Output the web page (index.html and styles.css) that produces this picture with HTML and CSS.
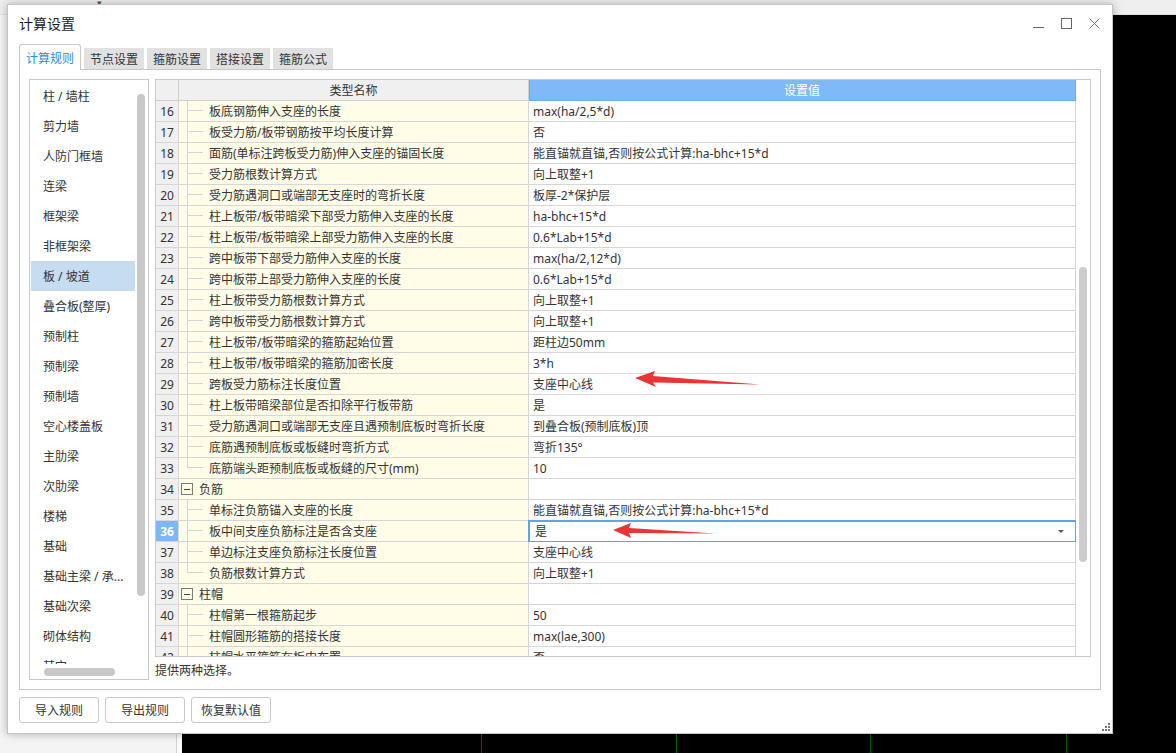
FILE: index.html
```html
<!DOCTYPE html>
<html lang="zh">
<head>
<meta charset="utf-8">
<title>计算设置</title>
<link rel="stylesheet" href="styles.css">
</head>
<body>
<div class="desktop">
  <div class="app-left"></div>
  <div class="app-top"><span class="caret">▾</span></div>
  <div class="bottom-strip">
    <i class="gl"></i><i class="gl"></i><i class="gl"></i><i class="gl"></i>
  </div>

  <div class="dialog">
    <div class="titlebar">
      <div class="title">计算设置</div>
      <div class="controls">
        <svg width="11" height="11" viewBox="0 0 11 11"><path d="M0 9.5H11" stroke="#666" stroke-width="1"/></svg>
        <svg width="11" height="11" viewBox="0 0 11 11"><rect x="0.5" y="0.5" width="10" height="10" fill="none" stroke="#666" stroke-width="1"/></svg>
        <svg width="11" height="11" viewBox="0 0 11 11"><path d="M0.5 0.5L10.5 10.5M10.5 0.5L0.5 10.5" stroke="#777" stroke-width="1"/></svg>
      </div>
    </div>

    <div class="tabs">
      <div class="tab active">计算规则</div>
      <div class="tab">节点设置</div>
      <div class="tab">箍筋设置</div>
      <div class="tab">搭接设置</div>
      <div class="tab">箍筋公式</div>
    </div>

    <div class="panel">
      <div class="list">
        <div class="items">
          <div class="item">柱 / 墙柱</div>
          <div class="item">剪力墙</div>
          <div class="item">人防门框墙</div>
          <div class="item">连梁</div>
          <div class="item">框架梁</div>
          <div class="item">非框架梁</div>
          <div class="item sel">板 / 坡道</div>
          <div class="item">叠合板(整厚)</div>
          <div class="item">预制柱</div>
          <div class="item">预制梁</div>
          <div class="item">预制墙</div>
          <div class="item">空心楼盖板</div>
          <div class="item">主肋梁</div>
          <div class="item">次肋梁</div>
          <div class="item">楼梯</div>
          <div class="item">基础</div>
          <div class="item">基础主梁 / 承...</div>
          <div class="item">基础次梁</div>
          <div class="item">砌体结构</div>
          <div class="item">其它</div>
        </div>
        <div class="lvs"><div class="thumb-v"></div></div>
        <div class="lhs"><div class="thumb-h"></div></div>
        <div class="corner"></div>
      </div>

      <div class="rightcol">
        <div class="grid">
          <div class="table">
            <div class="row head">
              <div class="c-num"></div>
              <div class="c-name">类型名称</div>
              <div class="c-val">设置值</div>
            </div>
            <div class="body">
              <div class="row"><div class="c-num">16</div><div class="c-name"><span class="br"><i></i><i></i></span>板底钢筋伸入支座的长度</div><div class="c-val">max(ha/2,5*d)</div></div>
              <div class="row"><div class="c-num">17</div><div class="c-name"><span class="br"><i></i><i></i></span>板受力筋/板带钢筋按平均长度计算</div><div class="c-val">否</div></div>
              <div class="row"><div class="c-num">18</div><div class="c-name"><span class="br"><i></i><i></i></span>面筋(单标注跨板受力筋)伸入支座的锚固长度</div><div class="c-val">能直锚就直锚,否则按公式计算:ha-bhc+15*d</div></div>
              <div class="row"><div class="c-num">19</div><div class="c-name"><span class="br"><i></i><i></i></span>受力筋根数计算方式</div><div class="c-val">向上取整+1</div></div>
              <div class="row"><div class="c-num">20</div><div class="c-name"><span class="br"><i></i><i></i></span>受力筋遇洞口或端部无支座时的弯折长度</div><div class="c-val">板厚-2*保护层</div></div>
              <div class="row"><div class="c-num">21</div><div class="c-name"><span class="br"><i></i><i></i></span>柱上板带/板带暗梁下部受力筋伸入支座的长度</div><div class="c-val">ha-bhc+15*d</div></div>
              <div class="row"><div class="c-num">22</div><div class="c-name"><span class="br"><i></i><i></i></span>柱上板带/板带暗梁上部受力筋伸入支座的长度</div><div class="c-val">0.6*Lab+15*d</div></div>
              <div class="row"><div class="c-num">23</div><div class="c-name"><span class="br"><i></i><i></i></span>跨中板带下部受力筋伸入支座的长度</div><div class="c-val">max(ha/2,12*d)</div></div>
              <div class="row"><div class="c-num">24</div><div class="c-name"><span class="br"><i></i><i></i></span>跨中板带上部受力筋伸入支座的长度</div><div class="c-val">0.6*Lab+15*d</div></div>
              <div class="row"><div class="c-num">25</div><div class="c-name"><span class="br"><i></i><i></i></span>柱上板带受力筋根数计算方式</div><div class="c-val">向上取整+1</div></div>
              <div class="row"><div class="c-num">26</div><div class="c-name"><span class="br"><i></i><i></i></span>跨中板带受力筋根数计算方式</div><div class="c-val">向上取整+1</div></div>
              <div class="row"><div class="c-num">27</div><div class="c-name"><span class="br"><i></i><i></i></span>柱上板带/板带暗梁的箍筋起始位置</div><div class="c-val">距柱边50mm</div></div>
              <div class="row"><div class="c-num">28</div><div class="c-name"><span class="br"><i></i><i></i></span>柱上板带/板带暗梁的箍筋加密长度</div><div class="c-val">3*h</div></div>
              <div class="row"><div class="c-num">29</div><div class="c-name"><span class="br"><i></i><i></i></span>跨板受力筋标注长度位置</div><div class="c-val">支座中心线</div></div>
              <div class="row"><div class="c-num">30</div><div class="c-name"><span class="br"><i></i><i></i></span>柱上板带暗梁部位是否扣除平行板带筋</div><div class="c-val">是</div></div>
              <div class="row"><div class="c-num">31</div><div class="c-name"><span class="br"><i></i><i></i></span>受力筋遇洞口或端部无支座且遇预制底板时弯折长度</div><div class="c-val">到叠合板(预制底板)顶</div></div>
              <div class="row"><div class="c-num">32</div><div class="c-name"><span class="br"><i></i><i></i></span>底筋遇预制底板或板缝时弯折方式</div><div class="c-val">弯折135°</div></div>
              <div class="row"><div class="c-num">33</div><div class="c-name"><span class="br last"><i></i><i></i></span>底筋端头距预制底板或板缝的尺寸(mm)</div><div class="c-val">10</div></div>
              <div class="row"><div class="c-num">34</div><div class="c-name"><span class="box"></span>负筋</div><div class="c-val"></div></div>
              <div class="row"><div class="c-num">35</div><div class="c-name"><span class="br"><i></i><i></i></span>单标注负筋锚入支座的长度</div><div class="c-val">能直锚就直锚,否则按公式计算:ha-bhc+15*d</div></div>
              <div class="row"><div class="c-num cur">36</div><div class="c-name"><span class="br"><i></i><i></i></span>板中间支座负筋标注是否含支座</div><div class="c-val editing"><span>是</span><span class="dd"></span></div></div>
              <div class="row"><div class="c-num">37</div><div class="c-name"><span class="br"><i></i><i></i></span>单边标注支座负筋标注长度位置</div><div class="c-val">支座中心线</div></div>
              <div class="row"><div class="c-num">38</div><div class="c-name"><span class="br last"><i></i><i></i></span>负筋根数计算方式</div><div class="c-val">向上取整+1</div></div>
              <div class="row"><div class="c-num">39</div><div class="c-name"><span class="box"></span>柱帽</div><div class="c-val"></div></div>
              <div class="row"><div class="c-num">40</div><div class="c-name"><span class="br"><i></i><i></i></span>柱帽第一根箍筋起步</div><div class="c-val">50</div></div>
              <div class="row"><div class="c-num">41</div><div class="c-name"><span class="br"><i></i><i></i></span>柱帽圆形箍筋的搭接长度</div><div class="c-val">max(lae,300)</div></div>
              <div class="row"><div class="c-num">42</div><div class="c-name"><span class="br"><i></i><i></i></span>柱帽水平箍筋在板中布置</div><div class="c-val">否</div></div>
            </div>
          </div>
          <div class="vs"><div class="thumb-g"></div></div>
        </div>
        <div class="note">提供两种选择。</div>
      </div>
    </div>

    <div class="buttons">
      <div class="btn">导入规则</div>
      <div class="btn">导出规则</div>
      <div class="btn">恢复默认值</div>
    </div>

    <svg class="grip" width="8" height="8" viewBox="0 0 8 8">
      <rect x="6" y="0" width="2" height="2" fill="#777"/>
      <rect x="3" y="3" width="2" height="2" fill="#777"/>
      <rect x="6" y="3" width="2" height="2" fill="#777"/>
      <rect x="0" y="6" width="2" height="2" fill="#777"/>
      <rect x="3" y="6" width="2" height="2" fill="#777"/>
      <rect x="6" y="6" width="2" height="2" fill="#777"/>
    </svg>
  </div>

  <svg class="arrows" width="1176" height="753" viewBox="0 0 1176 753">
    <polygon points="635,378 655,371 653,376 760,384.5 653,382.5 656,387" fill="#e83535"/>
    <polygon points="613,530 631,523 629,528 715,533.5 629,533 631,538" fill="#e83535"/>
  </svg>
</div>
</body>
</html>
```

FILE: styles.css
```css
* { box-sizing: border-box; }

html, body {
  margin: 0;
  padding: 0;
}

body {
  width: 1176px;
  height: 753px;
  overflow: hidden;
  background: #000;
  font-family: "Noto Sans", "Noto Sans CJK SC", sans-serif;
  font-size: 12px;
  color: #333;
}

.desktop {
  position: relative;
  width: 1176px;
  height: 753px;
}

/* background application pieces (desktop canvas) */
.app-left {
  position: absolute;
  left: 0;
  top: 0;
  width: 182px;
  height: 753px;
  background: #f4f4f4;
  border-right: 5px solid #fbfbfb;
  box-shadow: inset -6px 0 0 -5px #d0d0d0;
}

.app-top {
  position: absolute;
  left: 0;
  top: 0;
  width: 1176px;
  height: 15px;
  background: #efefef;
  border-bottom: 1px solid #e2e2e2;
}

.app-top .caret {
  position: absolute;
  left: 97px;
  top: -4px;
  font-size: 9px;
  color: #555;
}

.bottom-strip {
  position: absolute;
  left: 182px;
  top: 734px;
  width: 994px;
  height: 19px;
  background: #000;
}

.bottom-strip .gl {
  position: absolute;
  top: 0;
  width: 1px;
  height: 19px;
  background: #0b5a0b;
}
.bottom-strip .gl:nth-child(1) { left: 299px; }
.bottom-strip .gl:nth-child(2) { left: 494px; }
.bottom-strip .gl:nth-child(3) { left: 688px; }
.bottom-strip .gl:nth-child(4) { left: 884px; }

/* dialog window */
.dialog {
  position: absolute;
  left: 7px;
  top: 4px;
  width: 1106px;
  height: 730px;
  background: #fff;
  border: 1px solid #c4c4c4;
  box-shadow: 0 0 9px rgba(0, 0, 0, 0.28);
  display: flex;
  flex-direction: column;
}

.titlebar {
  height: 39px;
  flex: none;
  display: flex;
  align-items: center;
  justify-content: space-between;
  padding: 0 12px 0 11px;
}

.title {
  font-size: 14px;
  color: #1b1b1b;
  margin-bottom: 3px;
}

.controls {
  display: flex;
  align-items: center;
  gap: 17px;
  margin-bottom: 3px;
}

.controls svg { display: block; }

/* tabs */
.tabs {
  height: 25px;
  flex: none;
  display: flex;
  align-items: flex-end;
  gap: 3px;
  padding-left: 11px;
}

.tab {
  width: 60px;
  height: 21px;
  background: #e1e1e1;
  color: #333;
  display: flex;
  align-items: center;
  justify-content: center;
  font-size: 12px;
}

.tab.active {
  width: 62px;
  height: 26px;
  margin-bottom: -1px;
  background: #fff;
  border: 1px solid #c8c8c8;
  border-bottom: none;
  border-radius: 3px 3px 0 0;
  color: #2f8ae6;
  position: relative;
  z-index: 1;
}

/* tab panel */
.panel {
  margin: 0 11px;
  height: 621px;
  flex: none;
  border: 1px solid #c8c8c8;
  padding: 9px;
  display: flex;
  gap: 6px;
}

/* left category list */
.list {
  width: 120px;
  flex: none;
  border: 1px solid #c8c8c8;
  padding: 1px;
  display: grid;
  grid-template-columns: 104px 1fr;
  grid-template-rows: 1fr 14px;
}

.items {
  overflow: hidden;
}

.item {
  height: 30px;
  display: flex;
  align-items: center;
  padding-left: 12px;
  white-space: nowrap;
  color: #333;
}

.item.sel {
  background: #c6dcf1;
}

.lvs { padding: 13px 0 0 2px; }

.thumb-v {
  width: 8px;
  height: 502px;
  border-radius: 4px;
  background: #c8c8c8;
}

.lhs { padding: 4px 0 0 13px; }

.thumb-h {
  width: 71px;
  height: 8px;
  border-radius: 4px;
  background: #c8c8c8;
}

/* right column */
.rightcol {
  flex: 1;
  display: flex;
  flex-direction: column;
}

.grid {
  height: 578px;
  flex: none;
  border: 1px solid #c8c8c8;
  display: flex;
}

.table {
  width: 920px;
  flex: none;
  display: flex;
  flex-direction: column;
  overflow: hidden;
}

.body {
  flex: 1;
  overflow: hidden;
}

.row {
  display: flex;
  height: 21px;
}

.row > div {
  height: 21px;
  border-right: 1px solid #d6d6d6;
  border-bottom: 1px solid #d6d6d6;
  white-space: nowrap;
  overflow: hidden;
}

.c-num {
  width: 23px;
  flex: none;
  background: #f0f0f0;
  display: flex;
  align-items: center;
  justify-content: center;
  color: #333;
  font-size: 12px;
}

.c-num.cur {
  background: #7db8f5;
  color: #fff;
  font-weight: bold;
}

.c-name {
  width: 350px;
  flex: none;
  background: #fffde8;
  display: flex;
  align-items: center;
  color: #333;
}

.c-val {
  width: 547px;
  flex: none;
  background: #fff;
  display: flex;
  align-items: center;
  padding-left: 4px;
  color: #333;
}

.row.head .c-num,
.row.head .c-name {
  background: #f0f0f0;
  justify-content: center;
  border-color: #cfcfcf;
}

.row.head .c-val {
  background: #7fbaf7;
  color: #fff;
  justify-content: center;
  padding-left: 0;
  border-color: #6aa9ee;
  box-shadow: inset 1px 0 0 #6aa9ee;
}

/* tree branches */
.br {
  align-self: stretch;
  width: 16px;
  flex: none;
  margin: 0 6px 0 8px;
  display: flex;
  flex-direction: column;
}

.br i {
  display: block;
  border-left: 1px solid #d6d6d6;
}

.br i:first-child {
  height: 10px;
  border-bottom: 1px solid #d6d6d6;
}

.br i:last-child {
  flex: 1;
}

.br.last i:last-child {
  border-left: none;
}

.box {
  width: 12px;
  height: 12px;
  flex: none;
  margin: 0 6px 0 2px;
  border: 1px solid #7a7a7a;
  display: flex;
  align-items: center;
  justify-content: center;
}

.box::before {
  content: "";
  width: 6px;
  height: 1px;
  background: #444;
}

.c-val.editing {
  padding-left: 6px;
  justify-content: space-between;
  outline: 2px solid #64a2e6;
  outline-offset: -1px;
}

.dd {
  width: 0;
  height: 0;
  margin-right: 11px;
  border-left: 3px solid transparent;
  border-right: 3px solid transparent;
  border-top: 3px solid #555;
}

.vs {
  flex: 1;
  padding: 187px 0 0 3px;
  background: #fff;
}

.thumb-g {
  width: 8px;
  height: 295px;
  border-radius: 4px;
  background: #cdcdcd;
}

.note {
  flex: 1;
  display: flex;
  align-items: center;
  padding-top: 3px;
  color: #333;
}

/* bottom buttons */
.buttons {
  display: flex;
  gap: 6px;
  margin: 7px 11px 0;
  flex: none;
}

.btn {
  width: 80px;
  height: 26px;
  border: 1px solid #c8c8c8;
  border-radius: 3px;
  background: #fff;
  display: flex;
  align-items: center;
  justify-content: center;
  color: #333;
}

.grip {
  position: absolute;
  right: 2px;
  bottom: 2px;
}

.arrows {
  position: absolute;
  left: 0;
  top: 0;
  pointer-events: none;
}
```
